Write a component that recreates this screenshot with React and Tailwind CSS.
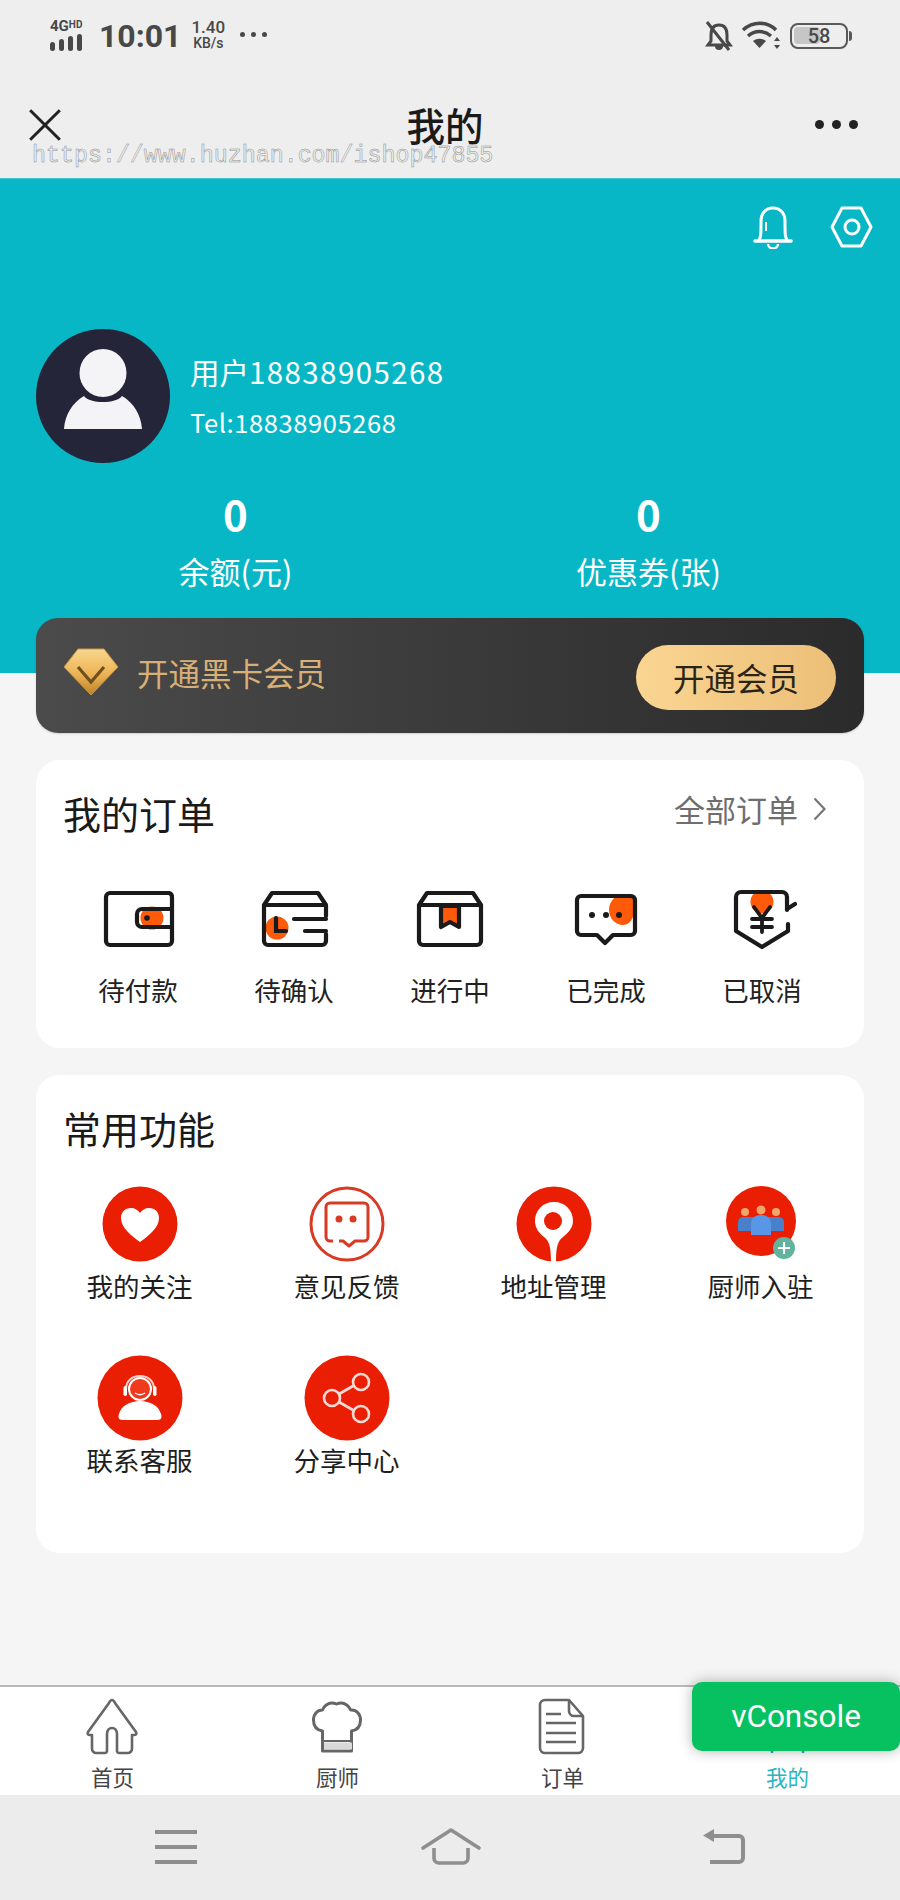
import React from "react";

const K = "#1a1a1a";
const O = "#ff5a0a";
const R = "#ea1e02";
const F = { fontFamily: '"Noto Sans CJK SC", "Noto Sans", sans-serif' };
const Rb = { fontFamily: 'Roboto, "Noto Sans", sans-serif' };

function Svg({ box, w, h, children, className = "" }) {
  return (
    <svg viewBox={box} width={w} height={h} fill="none" className={`block ${className}`}>
      {children}
    </svg>
  );
}

function Dots({ color, gap, size }) {
  return (
    <div className="flex" style={{ gap }}>
      {[0, 1, 2].map((i) => (
        <span key={i} className="block rounded-full" style={{ width: size, height: size, background: color }} />
      ))}
    </div>
  );
}

function StatusBar() {
  return (
    <div className="flex h-[70px] items-start justify-between pl-[50px] pr-[52px] pt-[16px] text-[#484848]" style={Rb}>
      <div className="flex items-center">
        <div className="flex w-[38px] flex-col">
          <div className="flex h-[14px] items-start text-[15px] font-bold leading-[14px]">
            4G<span className="text-[10px] leading-[11px]">HD</span>
          </div>
          <div className="mt-[1px] flex h-[17px] items-end gap-[4px]">
            <span className="block h-[9px] w-[5px] rounded-full bg-[#484848]" />
            <span className="block h-[12px] w-[5px] rounded-full bg-[#484848]" />
            <span className="block h-[15px] w-[5px] rounded-full bg-[#484848]" />
            <span className="block h-[17px] w-[5px] rounded-full bg-[#484848]" />
          </div>
        </div>
        <div className="ml-[11px] mt-[3px] text-[32px] font-bold leading-[34px]">10:01</div>
        <div className="ml-[10px] flex flex-col text-center">
          <span className="text-[17px] font-medium leading-[18px]">1.40</span>
          <span className="text-[14px] font-medium leading-[15px]">KB/s</span>
        </div>
        <div className="-mt-[1px] ml-[15px]">
          <Dots color="#484848" gap="6px" size="5px" />
        </div>
      </div>
      <div className="flex items-center gap-[5px] pt-[5px]">
        <Svg box="704 20 32 30" w={32} h={30}>
          <path d="M720 24c-6 0-8 4-8 10v6l-3 4h22l-3-4v-6c0-6-2-10-8-10z" stroke="#484848" strokeWidth="3" />
          <path d="M716 45a4 4 0 0 0 8 0z" fill="#484848" />
          <path d="M708 21l22 28" stroke="#484848" strokeWidth="3" />
        </Svg>
        <Svg box="740 20 42 30" w={42} h={30}>
          <path d="M743 29c10-9 24-9 33 0" stroke="#484848" strokeWidth="3.500" />
          <path d="M748 35c7-6 16-6 23 0" stroke="#484848" strokeWidth="3.500" />
          <path d="M753 40c4-3 9-3 13 0l-6.500 7z" fill="#484848" />
          <path d="M777 36l3 4h-6zM777 48l3-4h-6z" fill="#484848" />
        </Svg>
        <div className="relative ml-[3px] flex h-[26px] w-[58px] items-center rounded-[8px] border-[2.5px] border-[#585858]">
          <span className="absolute left-[2px] top-[2px] h-[17px] w-[26px] rounded-[4px] bg-[#c6c6c6]" />
          <span className="relative w-full text-center text-[20px] font-medium leading-[20px]">58</span>
          <span className="absolute -right-[6px] top-[6px] h-[10px] w-[3px] rounded-r-full bg-[#585858]" />
        </div>
      </div>
    </div>
  );
}

function NavBar() {
  return (
    <div className="relative flex h-[108px] items-start justify-between pl-[27px] pr-[42px] pt-[38px]">
      <Svg box="28 108 34 32" w={36} h={34}>
        <path d="M31 110l28 28M59 110l-28 28" stroke="#222" strokeWidth="2.800" />
      </Svg>
      <div className="absolute left-[0px] top-[35px] w-[890px] text-center text-[38.500px] font-medium leading-[38px] text-[#1a1a1a]" style={F}>
        我的
      </div>
      <div className="pt-[12px]">
        <Dots color="#222" gap="8px" size="9px" />
      </div>
      <div
        className="absolute left-[32px] top-[74px] text-[23.300px] leading-[24px] text-transparent [-webkit-text-stroke:0.5px_#8f8f8f]"
        style={{ fontFamily: '"Liberation Mono", monospace' }}
      >
        https://www.huzhan.com/ishop47855
      </div>
    </div>
  );
}

function Hero() {
  return (
    <div className="h-[495px] border-t border-[#3fc4cf] bg-[#07b7c5] text-white" style={F}>
      <div className="flex justify-end gap-[33px] pr-[25px] pt-[26px]">
        <Svg box="750 205 44 44" w={44} h={44}>
          <path d="M757 240c2-3 2-6 2-19 0-8 5-13 12-13s12 5 12 13c0 13 0 16 2 19" stroke="#fff" strokeWidth="3" />
          <path d="M753 241h36" stroke="#fff" strokeWidth="3.600" strokeLinecap="round" />
          <path d="M766 244a5 4.500 0 0 0 10 0" stroke="#fff" strokeWidth="2.500" />
          <path d="M764 222v9" stroke="#fff" strokeWidth="2" />
        </Svg>
        <Svg box="830 205 46 44" w={46} h={44}>
          <path d="M843 208h19l10 19-10 19h-19l-10-19z" stroke="#fff" strokeWidth="3" strokeLinejoin="round" />
          <circle cx="853" cy="227" r="7" stroke="#fff" strokeWidth="3" />
        </Svg>
      </div>
      <div className="ml-[36px] mt-[79px] flex items-center">
        <Svg box="36 328 134 136" w={134} h={136} className="shrink-0">
          <circle cx="103" cy="396" r="67" fill="#252539" />
          <ellipse cx="103" cy="373" rx="23.500" ry="24" fill="#f4f4f6" />
          <path d="M64 429c1-14 8-26 20-33 6 8 32 8 38 0 12 7 19 19 20 33z" fill="#f4f4f6" />
        </Svg>
        <div className="ml-[20px] -mt-[3px] flex flex-col">
          <div className="text-[29.500px] leading-[40px]">
            用户<span className="tracking-[1.4px]">18838905268</span>
          </div>
          <div className="mt-[14px] text-[25.500px] leading-[34px] tracking-[0.6px]">Tel:18838905268</div>
        </div>
      </div>
      <div className="ml-[29px] mt-[21px] grid w-[826px] grid-cols-2 text-center">
        <div>
          <div className="text-[42px] font-bold leading-[56px]">0</div>
          <div className="mt-[9px] text-[31px] leading-[42px]">余额(元)</div>
        </div>
        <div>
          <div className="text-[42px] font-bold leading-[56px]">0</div>
          <div className="mt-[9px] text-[31px] leading-[42px]">优惠券(张)</div>
        </div>
      </div>
    </div>
  );
}

function VipCard() {
  return (
    <div className="relative mx-[36px] -mt-[55px] flex h-[115px] items-center justify-between rounded-[22px] bg-gradient-to-r from-[#4b4b4b] to-[#2b2b2b] pl-[27px] pr-[28px] shadow-[0_1px_2px_rgba(0,0,0,0.15)]" style={F}>
      <div className="-mt-[7px] flex items-center">
        <Svg box="62 651 57 49" w={57} h={49}>
          <defs>
            <linearGradient id="dia" x1="0" y1="0" x2="0" y2="1">
              <stop offset="0" stopColor="#f8d78e" />
              <stop offset="0.55" stopColor="#ecb354" />
              <stop offset="1" stopColor="#bd8228" />
            </linearGradient>
          </defs>
          <path d="M77 652h26l14 18-27 28-27-28z" fill="url(#dia)" stroke="#c9973f" strokeWidth="1" strokeLinejoin="round" />
          <path d="M77 670l13 15 13-15" stroke="#6e5020" strokeWidth="3.200" strokeLinejoin="miter" />
        </Svg>
        <div className="ml-[17px] text-[31.500px] leading-[40px] text-[#d8b077]">开通黑卡会员</div>
      </div>
      <div className="mt-[4px] flex h-[65px] w-[200px] items-center justify-center rounded-full bg-gradient-to-r from-[#fad592] to-[#ecbf78] text-[31.500px] text-[#2a2418]">
        开通会员
      </div>
    </div>
  );
}

const Wallet = (
  <Svg box="98 885 80 65" w={80} h={65}>
    <circle cx="152" cy="917" r="11.500" fill={O} />
    <path d="M169 892H110a4 4 0 0 0-4 4v44a4 4 0 0 0 4 4h58a4 4 0 0 0 4-4V896a4 4 0 0 0-3-4z" stroke={K} strokeWidth="4.200" />
    <path d="M171 908h-29a5 5 0 0 0-5 5v8a5 5 0 0 0 5 5h29" stroke={K} strokeWidth="4.200" />
    <circle cx="147" cy="917" r="2.800" fill={K} />
  </Svg>
);
const Confirm = (
  <Svg box="254 885 80 65" w={80} h={65}>
    <circle cx="277" cy="927" r="11.500" fill={O} />
    <path d="M264 904v36a4 4 0 0 0 4 4h54a4 4 0 0 0 4-4v-7M326 915v-11M264 904l8-12h46l8 12zM264 904h62" stroke={K} strokeWidth="4.200" strokeLinejoin="round" strokeLinecap="round" />
    <path d="M276 917v13h10M294 918h32M305 930h21" stroke={K} strokeWidth="4.200" strokeLinecap="round" />
  </Svg>
);
const Progress = (
  <Svg box="410 885 80 65" w={80} h={65}>
    <path d="M441 905h18v21l-9-5-9 5z" fill={O} stroke={K} strokeWidth="4.200" strokeLinejoin="round" />
    <path d="M419 904v36a4 4 0 0 0 4 4h54a4 4 0 0 0 4-4v-36l-8-12h-46zM419 904h62" stroke={K} strokeWidth="4.200" strokeLinejoin="round" />
  </Svg>
);
const Done = (
  <Svg box="566 885 80 65" w={80} h={65}>
    <path d="M617 895h17v14c0 9-5 15-11 15-8 0-14-7-14-15 0-6 3-11 8-14z" fill={O} />
    <path d="M581 895h50a4 4 0 0 1 4 4v31a4 4 0 0 1-4 4h-18l-8 8-8-8h-16a4 4 0 0 1-4-4v-31a4 4 0 0 1 4-4z" stroke={K} strokeWidth="4.200" strokeLinejoin="round" />
    <circle cx="592" cy="914" r="3" fill={K} />
    <circle cx="606" cy="914" r="3" fill={K} />
    <circle cx="619" cy="914" r="3" fill={K} />
  </Svg>
);
const Cancel = (
  <Svg box="721 885 80 65" w={80} h={65}>
    <circle cx="761" cy="901" r="11.500" fill={O} />
    <path d="M786 909v-13a5 5 0 0 0-5-5h-41a5 5 0 0 0-5 5v34l26 16 26-16v-7M786 908l8-5" stroke={K} strokeWidth="4.200" strokeLinecap="round" strokeLinejoin="round" />
    <path d="M753 906l8 11 8-11M751 918h20M751 926h20M761 917v14" stroke={K} strokeWidth="3.800" strokeLinecap="round" />
  </Svg>
);

const orders = [
  ["待付款", Wallet],
  ["待确认", Confirm],
  ["进行中", Progress],
  ["已完成", Done],
  ["已取消", Cancel],
];

function Orders() {
  return (
    <div className="mx-[36px] mt-[27px] h-[288px] rounded-[24px] bg-white pt-[29px]" style={F}>
      <div className="flex items-start justify-between pl-[27px] pr-[37px]">
        <div className="text-[38px] leading-[48px] text-[#1a1a1a]">我的订单</div>
        <div className="-mt-[2px] flex items-center text-[#6e6e6e]">
          <span className="text-[31px] leading-[44px]">全部订单</span>
          <svg viewBox="0 0 14 24" width="14" height="24" fill="none" className="ml-[15px] block">
            <path d="M1.500 1.500l10 10.500-10 10.500" stroke="#777" strokeWidth="2.200" />
          </svg>
        </div>
      </div>
      <div className="ml-[24px] mt-[49px] grid w-[780px] grid-cols-5">
        {orders.map(([label, icon]) => (
          <div key={label} className="flex flex-col items-center">
            {icon}
            <div className="mt-[21px] text-[26.500px] leading-[36px] text-[#222]">{label}</div>
          </div>
        ))}
      </div>
    </div>
  );
}

const Heart = (
  <Svg box="0 0 76 76" w={76} h={76}>
    <circle cx="38" cy="38" r="37.500" fill={R} />
    <path d="M38 56C30 50 19 42 19 32c0-6 4-10 10-10 4 0 7 2 9 5 2-3 5-5 9-5 6 0 10 4 10 10 0 10-11 18-19 24z" fill="#fff" />
  </Svg>
);
const Feedback = (
  <Svg box="0 0 76 76" w={76} h={76}>
    <circle cx="38" cy="38" r="36" stroke="#d83a24" strokeWidth="3" fill="#fff" />
    <path d="M24 55h-3a4 4 0 0 1-4-4V21a4 4 0 0 1 4-4h34a4 4 0 0 1 4 4v30a4 4 0 0 1-4 4h-9l-6 5-6-5h-4" stroke="#d83a24" strokeWidth="3" strokeLinejoin="round" />
    <circle cx="30" cy="33" r="3.500" fill="#d83a24" />
    <circle cx="44" cy="33" r="3.500" fill="#d83a24" />
  </Svg>
);
const Pin = (
  <Svg box="0 0 76 76" w={76} h={76}>
    <circle cx="38" cy="38" r="37.500" fill={R} />
    <path d="M38 16c-11 0-19 8-19 19 0 7 4 12 9 16 5 4 7 9 7 25h5c0-16 2-21 7-25 5-4 10-9 10-16 0-11-8-19-19-19z" fill="#fff" />
    <circle cx="37" cy="35" r="9" fill={R} />
  </Svg>
);
const Chef = (
  <div className="relative h-[76px] w-[76px]">
    <Svg box="0 0 76 76" w={76} h={76}>
      <circle cx="38" cy="35" r="35" fill={R} />
      <circle cx="53" cy="26" r="4" fill="#f0a56a" />
      <circle cx="22" cy="26" r="4" fill="#f0a56a" />
      <path d="M15 45V36a5 5 0 0 1 5-5h36a5 5 0 0 1 5 5v9z" fill="#4a7fc9" />
      <circle cx="38" cy="24" r="4.500" fill="#f0a56a" />
      <path d="M28 49V38c0-6 4-9 10-9s10 3 10 9v11z" fill="#5a96e6" />
    </Svg>
    <div className="absolute left-[50px] top-[51px] flex h-[22px] w-[22px] items-center justify-center rounded-full bg-[#62b39d]">
      <svg viewBox="0 0 12 12" width="12" height="12" fill="none" className="block">
        <path d="M6 0v12M0 6h12" stroke="#fff" strokeWidth="2" />
      </svg>
    </div>
  </div>
);
const Service = (
  <Svg box="0 0 86 86" w={86} h={86}>
    <circle cx="43" cy="43" r="42.500" fill={R} />
    <path d="M29 37v-3c0-8 6-13 14-13s14 5 14 13v3" stroke="#fbd2c8" strokeWidth="2" />
    <rect x="26.500" y="31" width="3.500" height="10" rx="1.700" fill="#fff" />
    <rect x="56" y="31" width="3.500" height="10" rx="1.700" fill="#fff" />
    <path d="M26 65c-5 0-5-3-4-6 2-8 11-13 21-13s19 5 21 13c1 3 1 6-4 6z" fill="#fff" />
    <circle cx="43" cy="34" r="11" fill="#ef3a1e" stroke="#fff" strokeWidth="2" />
    <path d="M38 38c3 2 7 2 10 0" stroke="#fff" strokeWidth="1.500" />
  </Svg>
);
const Share = (
  <Svg box="0 0 86 86" w={86} h={86}>
    <circle cx="43" cy="43" r="42.500" fill={R} />
    <g stroke="#fbdcd5" strokeWidth="2.600">
      <path d="M35 39l14-8M35 47l14 8" />
      <circle cx="28" cy="43" r="8" />
      <circle cx="57" cy="27" r="8" />
      <circle cx="57" cy="59" r="8" />
    </g>
  </Svg>
);

function Feature({ icon, label, row2 }) {
  return (
    <div className={`flex flex-col items-center ${row2 ? "h-[130px]" : "h-[169px]"}`}>
      {icon}
      <div className={`text-[26.500px] leading-[36px] text-[#1e1e1e] ${row2 ? "mt-[1px]" : "mt-[6px]"}`}>{label}</div>
    </div>
  );
}

function Features() {
  return (
    <div className="mx-[36px] mt-[27px] h-[478px] rounded-[24px] bg-white" style={F}>
      <div className="pl-[27px] pt-[29px] text-[38px] leading-[48px] text-[#1a1a1a]">常用功能</div>
      <div className="mt-[34px] grid grid-cols-4">
        <Feature icon={Heart} label="我的关注" />
        <Feature icon={Feedback} label="意见反馈" />
        <Feature icon={Pin} label="地址管理" />
        <Feature icon={Chef} label="厨师入驻" />
        <Feature icon={Service} label="联系客服" row2 />
        <Feature icon={Share} label="分享中心" row2 />
      </div>
    </div>
  );
}

const G = "#666";
const tabs = [
  [
    "首页",
    <Svg key="a" box="84 1697 57 60" w={57} h={60}>
      <path d="M112 1700c-1 0-2 1-3 3l-21 29c-1 2 0 3 2 3h2v14c0 2 2 4 4 4h9c1 0 2-1 2-2v-17c0-8 10-8 10 0v17c0 1 1 2 2 2h9c2 0 4-2 4-4v-14h2c2 0 3-1 2-3l-21-29c-1-2-2-3-3-3z" stroke={G} strokeWidth="2.600" strokeLinejoin="round" />
    </Svg>,
  ],
  [
    "厨师",
    <Svg key="b" box="309 1697 57 60" w={57} h={60}>
      <path d="M323 1751v-20c-6-1-9-5-9-11 0-6 4-10 9-10 1-4 6-7 9-7 1 0 3 0 5 1 2-1 4-1 5-1 3 0 8 3 9 7 0 0 1 0 1 0 5 0 9 4 9 10 0 6-3 10-9 11v20z" stroke={G} strokeWidth="3" strokeLinejoin="round" transform="translate(-0.500 0)" />
      <path d="M323 1741h30" stroke={G} strokeWidth="2" />
      <path d="M324 1746h28" stroke="#d9d9d9" strokeWidth="7" />
    </Svg>,
  ],
  [
    "订单",
    <Svg key="c" box="534 1697 57 60" w={57} h={60}>
      <path d="M545 1700h24l14 16v32a5 5 0 0 1-5 5h-33a5 5 0 0 1-5-5v-43a5 5 0 0 1 5-5z" stroke={G} strokeWidth="2.600" strokeLinejoin="round" />
      <path d="M569 1700v11a5 5 0 0 0 5 5h9" stroke={G} strokeWidth="2.600" />
      <path d="M546 1714h15M546 1723h30M546 1733h30M546 1742h30" stroke={G} strokeWidth="2.600" />
    </Svg>,
  ],
  [
    "我的",
    <Svg key="d" box="759 1697 57 60" w={57} h={60}>
      <path d="M772 1751v2M803 1751v2" stroke="#07b7c5" strokeWidth="2.500" />
    </Svg>,
  ],
];

function TabBar() {
  return (
    <div className="grid h-[110px] grid-cols-4 border-t-2 border-[#b9b9b9] bg-white" style={F}>
      {tabs.map(([label, icon], i) => (
        <div key={label} className="flex flex-col items-center pt-[10px]">
          {icon}
          <div className={`mt-[6px] text-[21.500px] leading-[28px] ${i === 3 ? "text-[#2cb5c2]" : "text-[#444]"}`}>{label}</div>
        </div>
      ))}
    </div>
  );
}

function SystemBar() {
  return (
    <div className="grid h-[105px] grid-cols-3 bg-[#ececec] pt-[32px]">
      <div className="flex justify-center pl-[52px]">
        <Svg box="150 1827 52 40" w={52} h={40}>
          <path d="M155 1832h42M155 1847h42M155 1862h42" stroke="#8e8e8e" strokeWidth="4" />
        </Svg>
      </div>
      <div className="flex justify-center">
        <Svg box="416 1827 68 40" w={68} h={40}>
          <path d="M423 1848l28-18 28 18" stroke="#8e8e8e" strokeWidth="3.600" strokeLinecap="round" strokeLinejoin="round" />
          <path d="M434 1848v10a5 5 0 0 0 5 5h24a5 5 0 0 0 5-5v-10" stroke="#8e8e8e" strokeWidth="3.600" />
        </Svg>
      </div>
      <div className="flex justify-center pr-[52px]">
        <Svg box="698 1827 52 40" w={52} h={40}>
          <path d="M711 1836h28a4 4 0 0 1 4 4v18a4 4 0 0 1-4 4h-29" stroke="#8e8e8e" strokeWidth="4" />
          <path d="M714 1829v13l-11-6.500z" fill="#8e8e8e" />
        </Svg>
      </div>
    </div>
  );
}

export default function App() {
  return (
    <div className="relative flex h-[1900px] w-[900px] flex-col overflow-hidden bg-[#f5f5f5]">
      <div className="bg-[#eeeeee]">
        <StatusBar />
        <NavBar />
      </div>
      <Hero />
      <VipCard />
      <Orders />
      <Features />
      <div className="flex-1" />
      <TabBar />
      <SystemBar />
      <div
        className="absolute left-[692px] top-[1682px] flex h-[69px] w-[208px] items-center justify-center rounded-[10px] bg-[#07c160] text-[31.500px] text-white shadow-[0_0_14px_rgba(0,0,0,0.3)]"
        style={Rb}
      >
        vConsole
      </div>
    </div>
  );
}
